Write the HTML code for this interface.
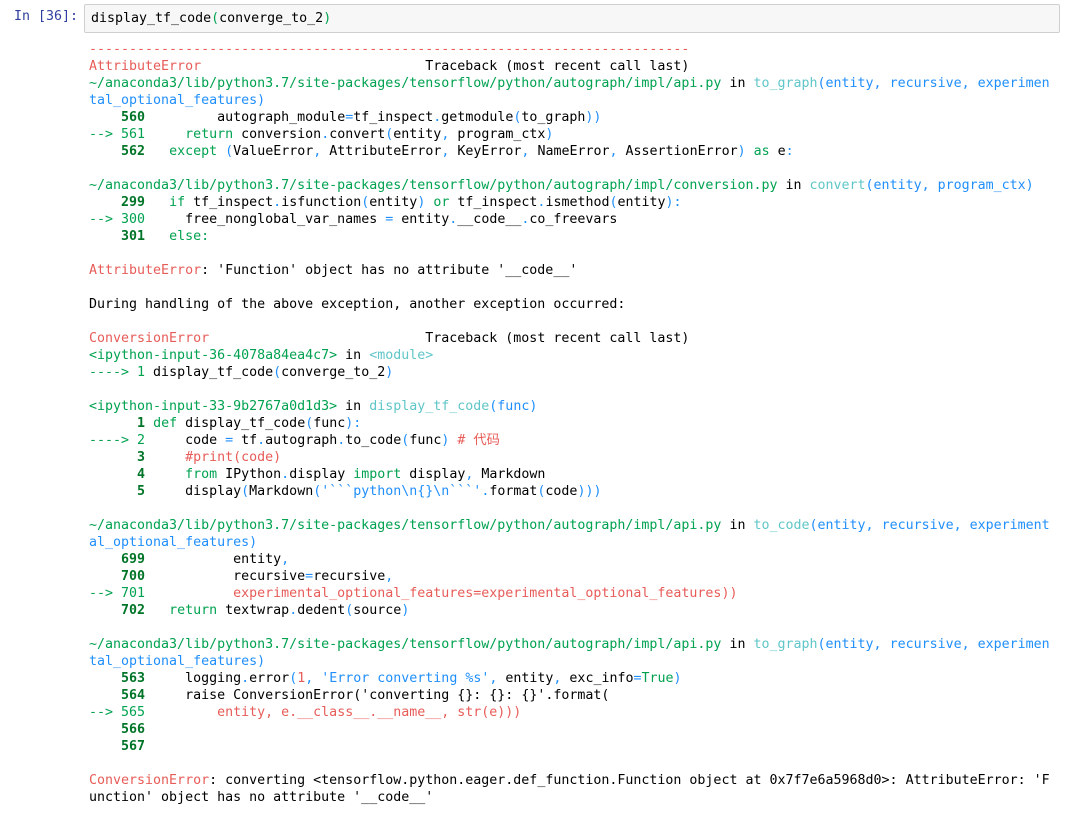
<!DOCTYPE html>
<html><head><meta charset="utf-8"><style>
body{margin:0;background:#fff;width:1080px;height:813px;overflow:hidden;font-family:"DejaVu Sans Mono","Liberation Mono","Noto Sans CJK SC",monospace;font-size:13.3px;color:#000}
.prompt{position:absolute;left:14px;top:9px;color:#303f9f;}
.inbox{position:absolute;left:84px;top:4px;width:976px;height:29px;border:1px solid #cfcfcf;background:#f7f7f7;border-radius:2px;box-sizing:border-box}
.inbox div{position:absolute;left:6px;top:5px;line-height:17px;white-space:pre}
pre{position:absolute;left:89px;top:41px;margin:0;font:inherit;line-height:17px;white-space:pre}
.r{color:#e75c58}.g{color:#00a250}.c{color:#60c6c8}.b{color:#208ffb}.n{color:#007427;font-weight:bold}
</style></head><body>
<div class="prompt">In [36]:</div>
<div class="inbox"><div>display_tf_code<span class="g">(</span>converge_to_2<span class="g">)</span></div></div>
<pre><span class="r">---------------------------------------------------------------------------</span>
<span class="r">AttributeError</span>                            Traceback (most recent call last)
<span class="g">~/anaconda3/lib/python3.7/site-packages/tensorflow/python/autograph/impl/api.py</span> in <span class="c">to_graph</span><span class="b">(entity, recursive, experimen</span>
<span class="b">tal_optional_features)</span>
    <span class="n">560</span>         autograph_module<span class="b">=</span>tf_inspect<span class="b">.</span>getmodule<span class="b">(</span>to_graph<span class="b">))</span>
<span class="g">--&gt; 561</span>     <span class="g">return</span> conversion<span class="b">.</span>convert<span class="b">(</span>entity<span class="b">,</span> program_ctx<span class="b">)</span>
    <span class="n">562</span>   <span class="g">except</span> <span class="b">(</span>ValueError<span class="b">,</span> AttributeError<span class="b">,</span> KeyError<span class="b">,</span> NameError<span class="b">,</span> AssertionError<span class="b">)</span> <span class="g">as</span> e<span class="b">:</span>

<span class="g">~/anaconda3/lib/python3.7/site-packages/tensorflow/python/autograph/impl/conversion.py</span> in <span class="c">convert</span><span class="b">(entity, program_ctx)</span>
    <span class="n">299</span>   <span class="g">if</span> tf_inspect<span class="b">.</span>isfunction<span class="b">(</span>entity<span class="b">)</span> <span class="g">or</span> tf_inspect<span class="b">.</span>ismethod<span class="b">(</span>entity<span class="b">):</span>
<span class="g">--&gt; 300</span>     free_nonglobal_var_names <span class="b">=</span> entity<span class="b">.</span>__code__<span class="b">.</span>co_freevars
    <span class="n">301</span>   <span class="g">else:</span>

<span class="r">AttributeError</span>: 'Function' object has no attribute '__code__'

During handling of the above exception, another exception occurred:

<span class="r">ConversionError</span>                           Traceback (most recent call last)
<span class="g">&lt;ipython-input-36-4078a84ea4c7&gt;</span> in <span class="c">&lt;module&gt;</span>
<span class="g">----&gt; 1</span> display_tf_code<span class="b">(</span>converge_to_2<span class="b">)</span>

<span class="g">&lt;ipython-input-33-9b2767a0d1d3&gt;</span> in <span class="c">display_tf_code</span><span class="b">(func)</span>
      <span class="n">1</span> <span class="g">def</span> display_tf_code<span class="b">(</span>func<span class="b">):</span>
<span class="g">----&gt; 2</span>     code <span class="b">=</span> tf<span class="b">.</span>autograph<span class="b">.</span>to_code<span class="b">(</span>func<span class="b">)</span> <span class="r"># 代码</span>
      <span class="n">3</span>     <span class="r">#print(code)</span>
      <span class="n">4</span>     <span class="g">from</span> IPython<span class="b">.</span>display <span class="g">import</span> display<span class="b">,</span> Markdown
      <span class="n">5</span>     display<span class="b">(</span>Markdown<span class="b">('&#96;&#96;&#96;python\n{}\n&#96;&#96;&#96;'</span><span class="b">.</span>format<span class="b">(</span>code<span class="b">)))</span>

<span class="g">~/anaconda3/lib/python3.7/site-packages/tensorflow/python/autograph/impl/api.py</span> in <span class="c">to_code</span><span class="b">(entity, recursive, experiment</span>
<span class="b">al_optional_features)</span>
    <span class="n">699</span>           entity<span class="b">,</span>
    <span class="n">700</span>           recursive<span class="b">=</span>recursive<span class="b">,</span>
<span class="g">--&gt; 701</span>           <span class="r">experimental_optional_features=experimental_optional_features))</span>
    <span class="n">702</span>   <span class="g">return</span> textwrap<span class="b">.</span>dedent<span class="b">(</span>source<span class="b">)</span>

<span class="g">~/anaconda3/lib/python3.7/site-packages/tensorflow/python/autograph/impl/api.py</span> in <span class="c">to_graph</span><span class="b">(entity, recursive, experimen</span>
<span class="b">tal_optional_features)</span>
    <span class="n">563</span>     logging<span class="b">.</span>error<span class="b">(</span><span class="r">1</span><span class="b">, 'Error converting %s',</span> entity<span class="b">,</span> exc_info<span class="b">=</span><span class="g">True</span><span class="b">)</span>
    <span class="n">564</span>     raise ConversionError('converting {}: {}: {}'.format(
<span class="g">--&gt; 565</span>         <span class="r">entity, e.__class__.__name__, str(e)))</span>
    <span class="n">566</span>
    <span class="n">567</span>

<span class="r">ConversionError</span>: converting &lt;tensorflow.python.eager.def_function.Function object at 0x7f7e6a5968d0&gt;: AttributeError: 'F
unction' object has no attribute '__code__'</pre>
</body></html>
